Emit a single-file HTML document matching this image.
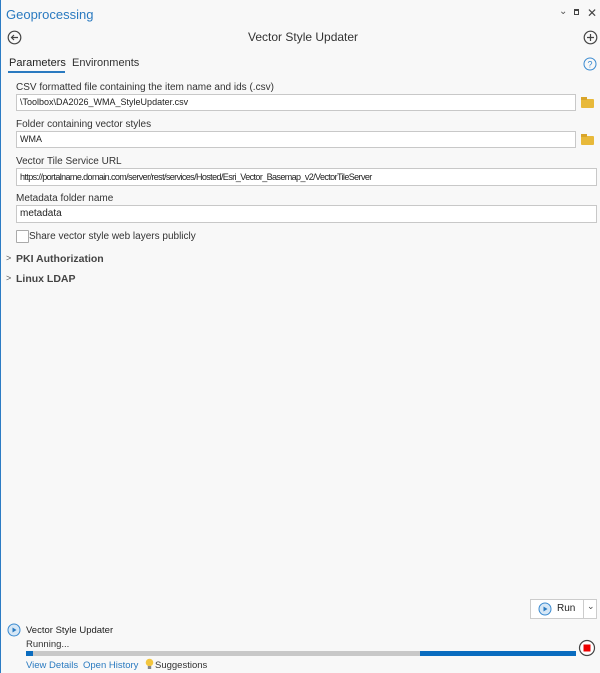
<!DOCTYPE html>
<html><head><style>
body{margin:0;width:600px;height:673px;background:#f8f8f8;font-family:"Liberation Sans",sans-serif;color:#333;position:relative;overflow:hidden}
.a{position:absolute;white-space:nowrap}
.lbl{font-size:10px;color:#333}
.inp{position:absolute;background:#fff;border:1px solid #c8c8c8;height:17px;box-sizing:border-box;font-size:9px;line-height:15px;padding-left:3px;color:#222}
.fold{position:absolute;width:13px;height:9px;background:#e8b93a;border-radius:1px}
.fold:before{content:"";position:absolute;left:0;top:-2px;width:6px;height:3px;background:#d9a52a}
.lnk{color:#2a7ac0;font-size:9.5px}
</style></head><body>
<div class="a" style="left:0;top:0;width:1px;height:673px;background:#2c7cc4"></div>
<div class="a" style="left:6px;top:7px;font-size:13px;color:#2a7ac0">Geoprocessing</div>
<div class="a" style="left:559px;top:6px;font-size:10px;color:#555">&#8964;</div>
<div class="a" style="left:574px;top:9px;width:5px;height:6px;border:1.2px solid #444;border-top-width:2px;box-sizing:border-box"></div>
<div class="a" style="left:587px;top:6px;font-size:12px;color:#444">✕</div>
<svg class="a" style="left:7px;top:30px" width="15" height="15"><circle cx="7.5" cy="7.5" r="6.3" fill="none" stroke="#444" stroke-width="1.2"/><path d="M11 7.5H4.5M7 5L4.5 7.5 7 10" fill="none" stroke="#444" stroke-width="1.2"/></svg>
<div class="a" style="left:248px;top:30px;font-size:12px;color:#333">Vector Style Updater</div>
<svg class="a" style="left:583px;top:30px" width="15" height="15"><circle cx="7.5" cy="7.5" r="6.3" fill="none" stroke="#444" stroke-width="1.2"/><path d="M7.5 4v7M4 7.5h7" stroke="#444" stroke-width="1.2"/></svg>
<div class="a" style="left:9px;top:57px;font-size:11px;color:#222">Parameters</div>
<div class="a" style="left:8px;top:71px;width:57px;height:2px;background:#2a7ac0"></div>
<div class="a" style="left:72px;top:57px;font-size:11px;color:#333">Environments</div>
<svg class="a" style="left:583px;top:57px" width="14" height="14"><circle cx="7" cy="7" r="6" fill="none" stroke="#3a8ad0" stroke-width="1"/><text x="7" y="10.5" font-size="9" text-anchor="middle" fill="#3a8ad0" font-family="Liberation Sans">?</text></svg>

<div class="a lbl" style="left:16px;top:82px">CSV formatted file containing the item name and ids (.csv)</div>
<div class="inp" style="left:16px;top:94px;width:560px">\Toolbox\DA2026_WMA_StyleUpdater.csv</div>
<div class="fold" style="left:581px;top:99px"></div>
<div class="a lbl" style="left:16px;top:119px">Folder containing vector styles</div>
<div class="inp" style="left:16px;top:131px;width:560px">WMA</div>
<div class="fold" style="left:581px;top:136px"></div>
<div class="a lbl" style="left:16px;top:156px">Vector Tile Service URL</div>
<div class="inp" style="left:16px;top:168px;width:581px;height:18px;line-height:16px;letter-spacing:-0.6px">https://portalname.domain.com/server/rest/services/Hosted/Esri_Vector_Basemap_v2/VectorTileServer</div>
<div class="a lbl" style="left:16px;top:193px">Metadata folder name</div>
<div class="inp" style="left:16px;top:205px;width:581px;height:18px;line-height:16px;font-size:10px">metadata</div>
<div class="a" style="left:16px;top:230px;width:11px;height:11px;border:1px solid #aaa;background:#fff;border-radius:1px"></div>
<div class="a lbl" style="left:29px;top:231px">Share vector style web layers publicly</div>
<div class="a" style="left:6px;top:253px;font-size:9px;color:#555">&gt;</div>
<div class="a" style="left:16px;top:253px;font-size:10.5px;font-weight:bold;color:#444">PKI Authorization</div>
<div class="a" style="left:6px;top:273px;font-size:9px;color:#555">&gt;</div>
<div class="a" style="left:16px;top:273px;font-size:10.5px;font-weight:bold;color:#444">Linux LDAP</div>

<div class="a" style="left:530px;top:599px;width:67px;height:20px;border:1px solid #ccc;background:#fff;box-sizing:border-box"></div>
<div class="a" style="left:583px;top:600px;width:1px;height:18px;background:#ccc"></div>
<svg class="a" style="left:538px;top:602px" width="14" height="14"><circle cx="7" cy="7" r="6" fill="#d6e7f6" stroke="#3a8ad0"/><path d="M5.5 4.5v5l4-2.5z" fill="#2a7ac0"/></svg>
<div class="a" style="left:557px;top:603px;font-size:10px;color:#222">Run</div>
<div class="a" style="left:587px;top:601px;font-size:9px;color:#444">&#8964;</div>

<svg class="a" style="left:7px;top:623px" width="14" height="14"><circle cx="7" cy="7" r="6" fill="#d6e7f6" stroke="#3a8ad0"/><path d="M5.5 4.5v5l4-2.5z" fill="#2a7ac0"/></svg>
<div class="a" style="left:26px;top:625px;font-size:9.5px;color:#222">Vector Style Updater</div>
<div class="a" style="left:26px;top:639px;font-size:9.5px;color:#333">Running...</div>
<div class="a" style="left:26px;top:651px;width:550px;height:5px;background:#c8c8c8"></div>
<div class="a" style="left:26px;top:651px;width:7px;height:5px;background:#0a6cbf"></div>
<div class="a" style="left:420px;top:651px;width:156px;height:5px;background:#0a6cbf"></div>
<svg class="a" style="left:578px;top:639px" width="18" height="18"><circle cx="9" cy="9" r="7.5" fill="#fff" stroke="#444" stroke-width="1.2"/><rect x="5.5" y="5.5" width="7" height="7" fill="#e00"/></svg>
<div class="a lnk" style="left:26px;top:660px">View Details</div>
<div class="a lnk" style="left:83px;top:660px">Open History</div>
<svg class="a" style="left:145px;top:658px" width="9" height="13"><circle cx="4.5" cy="4.5" r="3.8" fill="#f3c63e"/><rect x="2.8" y="8" width="3.4" height="3" fill="#888"/></svg>
<div class="a" style="left:155px;top:660px;font-size:9.5px;color:#333">Suggestions</div>
</body></html>
